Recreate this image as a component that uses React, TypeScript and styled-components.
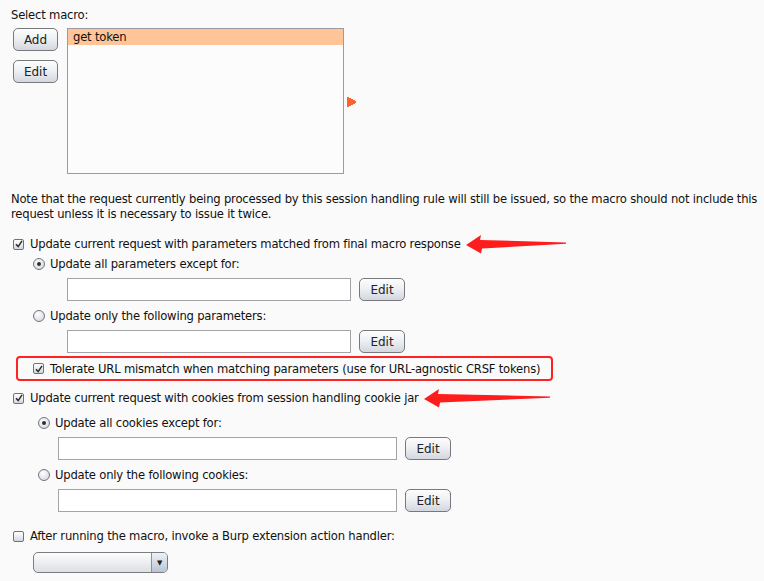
import React from 'react';
import styled, { createGlobalStyle } from 'styled-components';

const GlobalStyle = createGlobalStyle`
  html, body {
    margin: 0;
    padding: 0;
    background: #fafafa;
  }
  body {
    font-family: "DejaVu Sans", "Liberation Sans", sans-serif;
    font-size: 11.6px;
    letter-spacing: -0.2px;
    color: #111;
  }
`;

const Page = styled.div`
  display: flex;
  flex-direction: column;
  width: 764px;
  height: 581px;
  padding-top: 8px;
  box-sizing: border-box;
  overflow: hidden;
`;

const Label = styled.div<{ $left?: number }>`
  line-height: 15px;
  height: 15px;
  padding-left: ${(p) => p.$left ?? 11}px;
  white-space: nowrap;
`;

const MacroRow = styled.div`
  display: flex;
  margin-top: 5px;
  padding-left: 13px;
  height: 146px;
`;

const ButtonColumn = styled.div`
  display: flex;
  flex-direction: column;
  gap: 9px;
  width: 45px;
  margin-right: 9px;
`;

const Button = styled.button<{ $w?: number; $h?: number }>`
  width: ${(p) => p.$w ?? 45}px;
  height: ${(p) => p.$h ?? 23}px;
  padding: 0;
  border: 1px solid #77797d;
  border-radius: 5px;
  background: linear-gradient(#fdfdfd 0%, #eef0f3 45%, #d3d7de 100%);
  font-family: inherit;
  font-size: 12px;
  letter-spacing: 0;
  color: #222;
  flex-shrink: 0;
`;

const ListBox = styled.div`
  width: 277px;
  height: 146px;
  box-sizing: border-box;
  border: 1px solid #9b9ba3;
  background: #fcfcfc;
`;

const ListItem = styled.div<{ $selected?: boolean }>`
  height: 16px;
  line-height: 16px;
  padding-left: 5px;
  background: ${(p) => (p.$selected ? '#ffc598' : 'transparent')};
`;

const Marker = styled.svg`
  margin-left: 3px;
  margin-top: 69px;
`;

const Note = styled.div`
  margin-top: 18px;
  padding-left: 11px;
  line-height: 15px;
  width: 753px;
`;

const Row = styled.div<{ $top: number; $left: number; $gap?: number }>`
  display: flex;
  align-items: center;
  height: 20px;
  margin-top: ${(p) => p.$top}px;
  padding-left: ${(p) => p.$left}px;
  gap: ${(p) => p.$gap ?? 6}px;
  white-space: nowrap;
`;

const FieldRow = styled.div<{ $top: number; $left: number }>`
  display: flex;
  align-items: center;
  gap: 8px;
  margin-top: ${(p) => p.$top}px;
  padding-left: ${(p) => p.$left}px;
  height: 23px;
`;

const TextField = styled.div<{ $w: number }>`
  width: ${(p) => p.$w}px;
  height: 23px;
  box-sizing: border-box;
  border: 1px solid #a3a3a8;
  background: #ffffff;
`;

const CheckBox = styled.span`
  display: inline-flex;
  align-items: center;
  justify-content: center;
  width: 11px;
  height: 11px;
  box-sizing: border-box;
  border: 1px solid #6f7277;
  border-radius: 2px;
  background: linear-gradient(#ffffff, #d4d8de);
  flex-shrink: 0;
`;

const Radio = styled.span<{ $on?: boolean }>`
  display: inline-flex;
  align-items: center;
  justify-content: center;
  width: 12px;
  height: 12px;
  box-sizing: border-box;
  border: 1px solid #73767b;
  border-radius: 50%;
  background: radial-gradient(circle at 40% 35%, #ffffff, #cdd1d8);
  flex-shrink: 0;

  &::after {
    content: '';
    display: ${(p) => (p.$on ? 'block' : 'none')};
    width: 4px;
    height: 4px;
    border-radius: 50%;
    background: #2c2f33;
  }
`;

const Highlight = styled.div`
  display: flex;
  align-items: center;
  gap: 6px;
  margin-top: 3px;
  margin-left: 16px;
  width: 537px;
  height: 25px;
  box-sizing: border-box;
  padding-left: 15px;
  border: 2px solid #ff2222;
  border-radius: 4px;
  white-space: nowrap;
`;

const Arrow = styled.svg`
  flex-shrink: 0;
`;

const Combo = styled.div`
  display: flex;
  margin-top: 6px;
  margin-left: 33px;
  width: 135px;
  height: 21px;
  box-sizing: border-box;
  border: 1px solid #7a7c80;
  border-radius: 5px;
  overflow: hidden;
  background: linear-gradient(#fdfdfd, #dcdfe4);
`;

const ComboValue = styled.div`
  flex: 1;
`;

const ComboButton = styled.div`
  width: 15px;
  display: flex;
  align-items: center;
  justify-content: center;
  border-left: 1px solid #8d9096;
  background: linear-gradient(#eef2f8, #b9c4d3);
  font-size: 7px;
  color: #222;
`;

const Check = () => (
  <CheckBox>
    <svg width="8" height="8" viewBox="0 0 8 8">
      <path d="M1 4.2 L3.2 6.6 L7 0.8" fill="none" stroke="#2a2d33" strokeWidth="1.5" />
    </svg>
  </CheckBox>
);

const EmptyCheck = () => <CheckBox />;

const RedArrow = ({ width, marginLeft }: { width: number; marginLeft: number }) => (
  <Arrow width={width} height="20" viewBox={`0 0 ${width} 20`} style={{ marginLeft }}>
    <polygon
      points={`1,11 16,1 15,6 ${width - 1},8.4 ${width - 1},9.8 17,14.5 16,19.5`}
      fill="#ff1c1c"
    />
  </Arrow>
);

export default function App() {
  return (
    <>
      <GlobalStyle />
      <Page>
        <Label>Select macro:</Label>
        <MacroRow>
          <ButtonColumn>
            <Button>Add</Button>
            <Button>Edit</Button>
          </ButtonColumn>
          <ListBox>
            <ListItem $selected>get token</ListItem>
          </ListBox>
          <Marker width="9" height="10" viewBox="0 0 9 10">
            <polygon points="0,0 2,0 2,1 4,1 4,2 6,2 6,3 8,3 8,4 9,4 9,6 8,6 8,7 6,7 6,8 4,8 4,9 2,9 2,10 0,10" fill="#fa6430" />
          </Marker>
        </MacroRow>

        <Note>
          Note that the request currently being processed by this session handling rule will still be issued, so the macro should not include this request unless it is necessary to issue it twice.
        </Note>

        <Row $top={12} $left={13}>
          <Check />
          <span>Update current request with parameters matched from final macro response</span>
          <RedArrow width={102} marginLeft={-2} />
        </Row>
        <Row $top={0} $left={33} $gap={5}>
          <Radio $on />
          <span>Update all parameters except for:</span>
        </Row>
        <FieldRow $top={4} $left={67}>
          <TextField $w={284} />
          <Button $w={46}>Edit</Button>
        </FieldRow>
        <Row $top={5} $left={33} $gap={5}>
          <Radio />
          <span>Update only the following parameters:</span>
        </Row>
        <FieldRow $top={4} $left={67}>
          <TextField $w={284} />
          <Button $w={46}>Edit</Button>
        </FieldRow>

        <Highlight>
          <Check />
          <span>Tolerate URL mismatch when matching parameters (use for URL-agnostic CRSF tokens)</span>
        </Highlight>

        <Row $top={7} $left={13}>
          <Check />
          <span>Update current request with cookies from session handling cookie jar</span>
          <RedArrow width={128} marginLeft={-2} />
        </Row>
        <Row $top={5} $left={38} $gap={5}>
          <Radio $on />
          <span>Update all cookies except for:</span>
        </Row>
        <FieldRow $top={4} $left={58}>
          <TextField $w={339} />
          <Button $w={46}>Edit</Button>
        </FieldRow>
        <Row $top={5} $left={38} $gap={5}>
          <Radio />
          <span>Update only the following cookies:</span>
        </Row>
        <FieldRow $top={4} $left={58}>
          <TextField $w={339} />
          <Button $w={46}>Edit</Button>
        </FieldRow>

        <Row $top={14} $left={13}>
          <EmptyCheck />
          <span>After running the macro, invoke a Burp extension action handler:</span>
        </Row>
        <Combo>
          <ComboValue />
          <ComboButton>▼</ComboButton>
        </Combo>
      </Page>
    </>
  );
}
